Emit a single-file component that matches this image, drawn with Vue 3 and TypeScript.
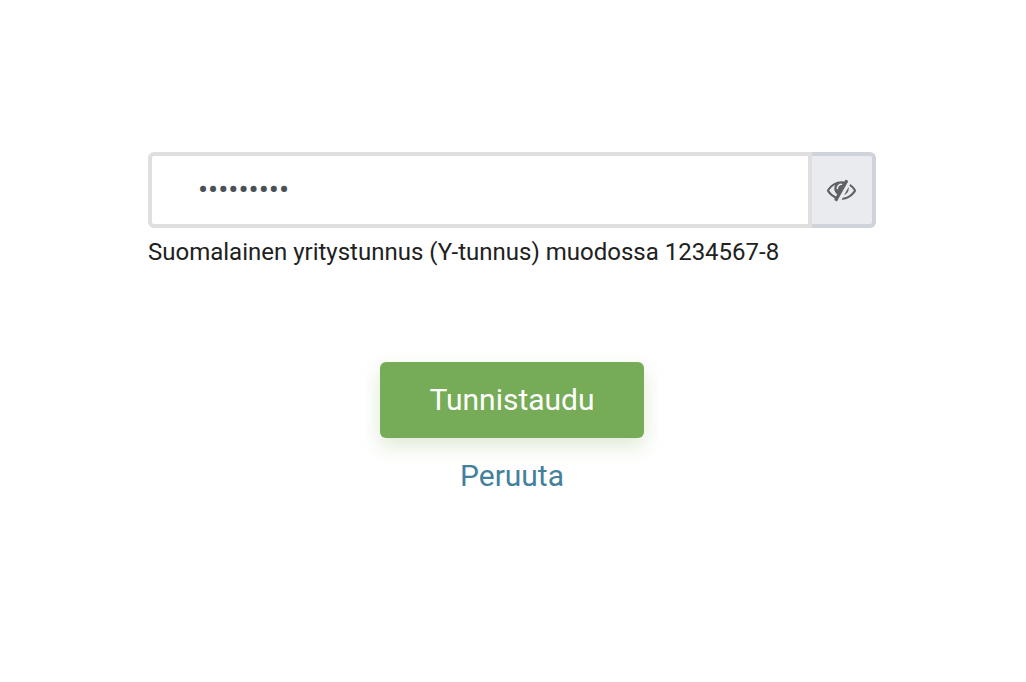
<script setup lang="ts">
const password = '123456789'
</script>

<template>
  <main class="page">
    <section class="form">
      <div class="field">
        <input class="input" type="password" :value="password" aria-label="Y-tunnus" />
        <button class="toggle" type="button" aria-label="Näytä">
          <svg class="eye" viewBox="0 0 1792 1792" width="29" height="29">
            <path fill="#5f6164" d="M555 1335l78-141q-87-63-136-159t-49-203q0-121 61-225-229 117-381 353 167 258 427 375zm389-759q0-20-14-34t-34-14q-125 0-214.500 89.500t-89.500 214.500q0 20 14 34t34 14 34-14 14-34q0-86 61-147t147-61q20 0 34-14t14-34zm363-191q0 7-1 9-106 189-316 567t-315 566l-49 89q-10 16-28 16-12 0-134-70-16-10-16-28 0-12 44-87-143-65-263.500-173t-208.500-245q-20-31-20-69t20-69q153-235 380-371t496-136q89 0 180 17l54-97q10-16 28-16 5 0 18 6t31 15.500 33 18.500 31.500 18.500 19.500 11.500q16 10 16 27zm37 447q0 139-79 253.500t-209 164.500l280-502q8 45 8 84zm448 128q0 35-20 69-39 64-109 145-150 172-347.500 267t-419.500 95l74-132q212-18 392.500-137t301.500-307q-115-179-282-294l63-112q95 64 182.500 153t144.500 184q20 34 20 69z" />
          </svg>
        </button>
      </div>
      <p class="hint">Suomalainen yritystunnus (Y-tunnus) muodossa 1234567-8</p>
      <div class="actions">
        <button class="submit" type="button">Tunnistaudu</button>
        <a class="cancel" href="#">Peruuta</a>
      </div>
    </section>
  </main>
</template>

<style scoped>
.page {
  width: 1024px;
  height: 682px;
  padding-top: 152px;
  box-sizing: border-box;
  display: flex;
  justify-content: center;
  background: #fff;
  font-family: Roboto, "Liberation Sans", sans-serif;
}
.form {
  width: 728px;
}
.field {
  display: flex;
  height: 76px;
}
.input {
  flex: 1;
  min-width: 0;
  box-sizing: border-box;
  height: 76px;
  border: 4px solid #dfdfdf;
  border-radius: 6px 0 0 6px;
  padding: 0 0 2px 46px;
  font-family: Roboto, sans-serif;
  font-size: 30px;
  color: #495057;
  background: #fff;
  outline: none;
}
.toggle {
  width: 64px;
  height: 76px;
  box-sizing: border-box;
  display: flex;
  align-items: center;
  justify-content: center;
  padding: 0 2px 2px 0;
  background: #e9ebef;
  border: 4px solid #ced4da;
  border-left: 0;
  border-radius: 0 6px 6px 0;
}
.eye {
  display: block;
}
.hint {
  margin: 10px 0 0;
  font-size: 24px;
  line-height: 28px;
  color: #212121;
}
.actions {
  margin-top: 96px;
  display: flex;
  flex-direction: column;
  align-items: center;
}
.submit {
  width: 264px;
  height: 76px;
  border: 0;
  border-radius: 6px;
  padding: 0 0 2px;
  background: #76ab57;
  color: #fff;
  font-family: Roboto, sans-serif;
  font-size: 30px;
  box-shadow: 0 8px 20px rgba(118, 171, 87, 0.25);
}
.cancel {
  margin-top: 20px;
  font-size: 30px;
  line-height: 36px;
  color: #44809c;
  text-decoration: none;
}
</style>
